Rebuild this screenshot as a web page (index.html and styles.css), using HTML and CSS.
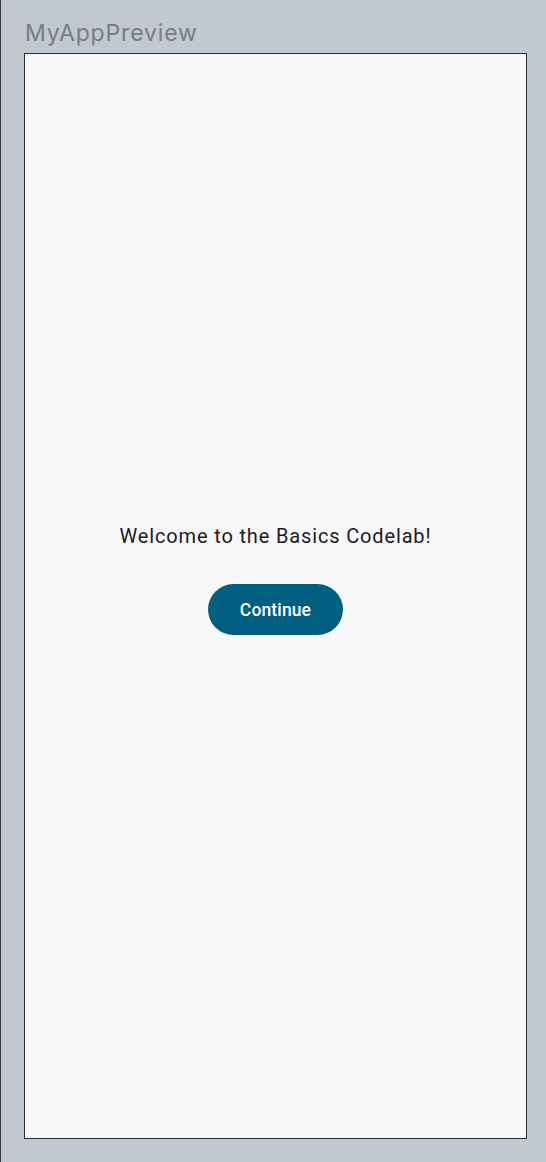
FILE: index.html
```html
<!DOCTYPE html>
<html>
<head>
<meta charset="utf-8">
<link rel="stylesheet" href="styles.css">
</head>
<body>
<div class="page">
  <div class="title">MyAppPreview</div>
  <div class="device">
    <div class="greeting">
      <p class="welcome">Welcome to the Basics Codelab!</p>
      <button class="continue">Continue</button>
    </div>
  </div>
</div>
</body>
</html>
```
FILE: styles.css
```css
html, body {
  margin: 0;
  padding: 0;
}
body {
  background: #c1c8cf;
  width: 546px;
  height: 1162px;
  overflow: hidden;
}
.page {
  box-sizing: border-box;
  height: 1162px;
  border-left: 1px solid #3a3d40;
  padding-left: 23px;
  display: flex;
  flex-direction: column;
}
.title {
  height: 53px;
  box-sizing: border-box;
  padding-top: 20px;
  padding-left: 1px;
  font-family: Inter, "Liberation Sans", sans-serif;
  font-size: 23px;
  line-height: 26px;
  letter-spacing: 0.85px;
  color: #787d82;
}
.device {
  box-sizing: border-box;
  width: 503px;
  height: 1086px;
  border: 1px solid #2e3033;
  background: #f8f8fa;
  display: flex;
  align-items: center;
  justify-content: center;
}
.greeting {
  display: flex;
  flex-direction: column;
  align-items: center;
  margin-top: -6px;
}
.welcome {
  margin: 0;
  font-family: Roboto, "Liberation Sans", sans-serif;
  font-size: 20px;
  line-height: 30px;
  letter-spacing: 0.85px;
  color: #1c1b1f;
}
.continue {
  margin: 33px 0 30px;
  width: 135px;
  height: 51px;
  border: none;
  border-radius: 26px;
  background: #005f80;
  color: #ffffff;
  font-family: Roboto, "Liberation Sans", sans-serif;
  font-weight: 500;
  font-size: 17.5px;
  letter-spacing: 0.13px;
  padding: 0;
}
```
